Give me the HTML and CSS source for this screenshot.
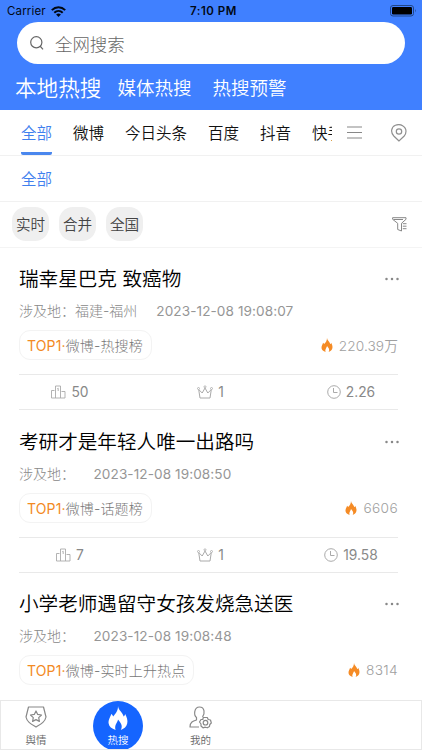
FILE: index.html
```html
<!DOCTYPE html>
<html lang="zh-CN">
<head>
<meta charset="utf-8">
<meta name="viewport" content="width=device-width">
<title>热搜</title>
<link rel="stylesheet" href="styles.css">
</head>
<body>
<svg class="sprite" aria-hidden="true">
  <symbol id="flame" viewBox="0 0 24 30"><path d="M12 0C12.500 5.500 18 8 19 13C20.500 12.500 20.500 11 21 10C23 14 24.500 18 23.500 22C22.500 26 20 28.500 15.500 30C18.500 25 15.500 21 12 17C11.500 21 7 24 9 30C4 28.500 1 26 .3 22C-.5 17 3 13 3.500 10C5 11 5.500 12 6 13C9.500 9 12 6 12 0Z" fill="currentColor"/></symbol>
  <symbol id="podium" viewBox="0 0 15 14"><path d="M.5 13V5.500H3.500M.5 13H4.500V1H9.500V13H4.500M10.500 6.500H14V13H9.500M6.300 3.700L7.200 3.200V6" fill="none" stroke="currentColor" stroke-width=".9"/></symbol>
  <symbol id="crown" viewBox="0 0 16 14"><path d="M3 13L1.700 4.500L5.200 8L8 3L10.800 8L14.300 4.500L13 13Z" fill="none" stroke="currentColor" stroke-width="1" stroke-linejoin="round"/><g fill="#fff" stroke="currentColor" stroke-width=".8"><circle cx="1.500" cy="3.500" r="1"/><circle cx="8" cy="1.800" r="1"/><circle cx="14.500" cy="3.500" r="1"/></g></symbol>
  <symbol id="clock" viewBox="0 0 14 14"><g fill="none" stroke="currentColor"><circle cx="7" cy="7" r="6.300"/><path d="M6.500 3V7.500H10.500"/></g></symbol>
  <symbol id="more" viewBox="0 0 14 4"><g fill="currentColor"><circle cx="1.500" cy="2" r="1.250"/><circle cx="7" cy="2" r="1.250"/><circle cx="12.500" cy="2" r="1.250"/></g></symbol>
</svg>
<div class="app">
  <header class="header">
    <div class="status">
      <div class="carrier">Carrier
        <svg width="15" height="11" viewBox="0 0 15 11"><g fill="none" stroke="#000814" stroke-width="2"><path d="M.8 4.100C4.700.3 10.300.3 14.200 4.100"/><path d="M3.300 6.700C5.700 4.400 9.300 4.400 11.700 6.700"/></g><path d="M5.100 8.500Q7.500 6.500 9.900 8.500L7.500 11Z" fill="#000814"/></svg>
      </div>
      <div class="time">7:10 PM</div>
      <div class="power"><svg width="27" height="12" viewBox="0 0 27 12"><rect x=".5" y=".5" width="23" height="10.500" rx="2.500" fill="none" stroke="#214687"/><rect x="2" y="2" width="20" height="7.500" rx="1.200"/><path d="M25 4Q26.500 5.700 25 7.500Z" fill="#214687"/></svg></div>
    </div>
    <div class="search">
      <svg width="14" height="14" viewBox="0 0 14 14"><g fill="none" stroke="#666" stroke-width="1.200"><circle cx="6.300" cy="6.300" r="5.600"/><path d="M10 10L13 13.300"/></g></svg>
      <span>全网搜索</span>
    </div>
    <nav class="sections"><b>本地热搜</b><span class="media">媒体热搜</span><span>热搜预警</span></nav>
  </header>
  <div class="channels">
    <nav class="channel-list"><span class="active">全部</span><span>微博</span><span>今日头条</span><span>百度</span><span>抖音</span><span>快手</span></nav>
    <svg class="menu" width="15" height="13" viewBox="0 0 15 13"><path d="M0 1H15M0 6.500H15M0 12H15" stroke="#888" stroke-width="1.100"/></svg>
    <svg class="pin" width="16" height="18" viewBox="0 0 16 18"><g fill="none" stroke="#909090" stroke-width="1.200"><path d="M8 17L2.800 12C-.8 8.300.3 3 4.400 1.300C9.500-.9 15 2.600 15 7.300C15 9.200 14.300 10.800 13.200 12Z"/><circle cx="8" cy="7.500" r="2.700"/></g></svg>
  </div>
  <div class="subchannels">全部</div>
  <div class="filters">
    <span class="chip">实时</span><span class="chip">合并</span><span class="chip">全国</span>
    <svg class="funnel" width="15" height="15" viewBox="0 0 15 15"><path d="M.6.700H14V2.300L9.500 6.300V14L5.700 12.500V6.300L.6 2.300ZM1.500 2.500H11M10.800 6.700H14.500M10.800 9.200H14.500M10.800 11.700H14.500" fill="none" stroke="#888" stroke-width="1"/></svg>
  </div>
  <main class="feed">
    <article class="card">
      <div class="title"><h2>瑞幸星巴克 致癌物</h2><svg width="14" height="4"><use href="#more"/></svg></div>
      <div class="meta"><span class="label">涉及地：</span><span class="place">福建-福州</span><time>2023-12-08 19:08:07</time></div>
      <div class="source"><div class="tag"><b>TOP1·</b>微博-热搜榜</div><div class="heat wan"><svg width="12" height="14"><use href="#flame"/></svg>220.39万</div></div>
      <div class="stats"><span><svg width="15" height="14"><use href="#podium"/></svg>50</span><span><svg width="16" height="14"><use href="#crown"/></svg>1</span><span><svg width="14" height="14"><use href="#clock"/></svg>2.26</span></div>
    </article>
    <article class="card">
      <div class="title"><h2>考研才是年轻人唯一出路吗</h2><svg width="14" height="4"><use href="#more"/></svg></div>
      <div class="meta"><span class="label">涉及地：</span><span class="place"></span><time>2023-12-08 19:08:50</time></div>
      <div class="source"><div class="tag"><b>TOP1·</b>微博-话题榜</div><div class="heat"><svg width="12" height="14"><use href="#flame"/></svg>6606</div></div>
      <div class="stats"><span><svg width="15" height="14"><use href="#podium"/></svg>7</span><span><svg width="16" height="14"><use href="#crown"/></svg>1</span><span><svg width="14" height="14"><use href="#clock"/></svg>19.58</span></div>
    </article>
    <article class="card">
      <div class="title"><h2>小学老师遇留守女孩发烧急送医</h2><svg width="14" height="4"><use href="#more"/></svg></div>
      <div class="meta"><span class="label">涉及地：</span><span class="place"></span><time>2023-12-08 19:08:48</time></div>
      <div class="source"><div class="tag"><b>TOP1·</b>微博-实时上升热点</div><div class="heat"><svg width="12" height="14"><use href="#flame"/></svg>8314</div></div>
    </article>
  </main>
  <nav class="tabbar">
    <div class="tab"><svg width="22" height="22" viewBox="0 0 22 22"><g fill="none" stroke="#888" stroke-width="1.200" stroke-linejoin="round"><path d="M3.500 1H18.500L21 11C20 16 16 18 11 21C6 18 2 16 1 11Z"/><path d="M11 5L12.700 8.400L16.500 9L13.700 11.600L14.400 15.400L11 13.600L7.600 15.400L8.300 11.600L5.500 9L9.300 8.400Z"/></g></svg><span>舆情</span></div>
    <div class="tab current"><div class="disc"><svg width="20" height="24"><use href="#flame"/></svg><span>热搜</span></div></div>
    <div class="tab mine"><svg width="23" height="23" viewBox="0 0 23 23"><g fill="none" stroke="#888" stroke-width="1.200" stroke-linejoin="round"><path d="M10 21H1C1 16 4 15 7.500 14V11.500C4.500 9 5 1 10.500 1C16 1 16 8 13.500 11"/><path d="M14.300 11.500H18.300L19.200 13.500L21.500 14L22.300 17L20.800 18.500L20.500 20.500L18.300 21.800L16.300 21.200L14 21.800L12 20L12 18L10.500 16L12 13.500L13.800 13.500Z"/><circle cx="16.500" cy="16.700" r="2.300"/></g></svg><span>我的</span></div>
  </nav>
</div>
</body>
</html>
```
FILE: styles.css
```css
* { box-sizing: border-box; }
body { margin: 0; background: #fff; font-family: Inter, "Noto Sans CJK SC", sans-serif; font-weight: 350; }
svg { display: block; flex: none; }
.sprite { position: absolute; width: 0; height: 0; }
.app { width: 422px; height: 750px; display: flex; flex-direction: column; overflow: hidden; white-space: nowrap; }
.header { height: 110px; flex: none; background: #4080ff; }
.status { height: 22px; display: grid; grid-template-columns: 1fr 1fr 1fr; align-items: center; padding: 0 6px 0 7px; color: #000814; font-size: 11.5px; line-height: 22px; font-weight: 400; }
.carrier { display: flex; align-items: center; gap: 5px; letter-spacing: .15px; }
.time { text-align: center; font-weight: 600; letter-spacing: .5px; padding-left: 4px; }
.power { display: flex; justify-content: flex-end; margin-right: -1px; }
.search { height: 42px; margin: 0 17px; padding-left: 13px; border-radius: 21px; background: #fff; display: flex; align-items: center; gap: 11px; font-size: 17.400px; font-weight: 300; color: #666; }
.sections { height: 46px; display: flex; align-items: center; padding: 2px 0 0 15px; color: #fff; font-size: 18.500px; line-height: 30px; }
.sections b { font-size: 21.600px; font-weight: 350; margin-right: 16px; }
.media { margin-right: 21px; }
.channels { height: 46px; flex: none; display: flex; align-items: center; border-bottom: 1px solid #f1f1f1; padding-right: 15px; }
.channel-list { width: 332px; height: 45px; overflow: hidden; display: flex; gap: 21px; padding-left: 21px; font-size: 15.500px; line-height: 47px; color: #111; }
.channel-list span { flex: none; }
.channel-list .active { height: 45px; color: #3f80ee; border-bottom: 3px solid #4a87ee; border-radius: 2px; }
.menu { margin-left: 15px; }
.pin { margin-left: auto; }
.subchannels { height: 46px; flex: none; padding-left: 21px; border-bottom: 1px solid #f1f1f1; font-size: 15.500px; line-height: 47px; color: #3f80ee; }
.filters { height: 46px; flex: none; display: flex; align-items: center; gap: 10px; padding: 0 15px 1px 12px; border-bottom: 1px solid #f4f4f4; }
.chip { width: 37px; height: 34px; border-radius: 14px; background: #efefef; color: #444; font-size: 14.600px; line-height: 36px; text-align: center; }
.funnel { margin-left: auto; }
.feed { height: 452px; flex: none; overflow: hidden; padding: 15px 24px 0 19px; }
.card { height: 162.500px; }
.title { height: 32px; display: flex; align-items: center; justify-content: space-between; margin-right: -1px; color: #888; }
.title h2 { margin: 0; color: #000; font-size: 19.600px; line-height: 32px; font-weight: 350; }
.meta { height: 32px; display: flex; align-items: center; color: #888; font-size: 14px; line-height: 32px; font-weight: 300; }
.label { width: 56px; }
.place { min-width: 18.500px; }
.place:not(:empty) { margin-right: 19px; }
time { font-size: 13.600px; letter-spacing: .08px; font-weight: 400; color: #969696; }
.source { height: 33px; display: flex; align-items: center; justify-content: space-between; padding-top: 3px; }
.tag { height: 30px; border: 1px solid #f3f3f3; border-radius: 11px; padding: 0 8px 0 7px; line-height: 29px; font-size: 14px; letter-spacing: .14px; font-weight: 300; color: #777; }
.tag b { font-weight: 400; color: #f38a23; }
.heat { display: flex; align-items: center; gap: 6px; font-size: 13.700px; letter-spacing: .35px; color: #a0a0a0; }
.wan { letter-spacing: .1px; }
.heat svg { color: #f58b25; }
.stats { height: 36px; margin: 14px 0 0; border-top: 1px solid #e9e9e9; border-bottom: 1px solid #e9e9e9; display: grid; grid-template-columns: 102px 1fr 94px; align-items: center; color: #888; font-size: 13.800px; font-weight: 400; }
.stats span { display: flex; align-items: center; justify-content: center; gap: 5px; }
.stats span:nth-child(2) { padding-right: 4px; }
.stats svg { color: #aaa; }
.tabbar { height: 50px; flex: none; display: flex; border: 1px solid #e8e8e8; overflow: hidden; font-size: 10.500px; line-height: 14px; color: #666; background: #fff; }
.tab { width: 70px; height: 48px; display: flex; flex-direction: column; align-items: center; gap: 6px; padding-top: 5px; }
.current { width: 94px; padding-top: 0; color: #fff; }
.mine { width: 71px; gap: 5px; }
.disc { width: 50px; height: 50px; flex: none; border-radius: 50%; background: #1565ff; display: flex; flex-direction: column; align-items: center; padding-top: 5px; gap: 4px; }
```
